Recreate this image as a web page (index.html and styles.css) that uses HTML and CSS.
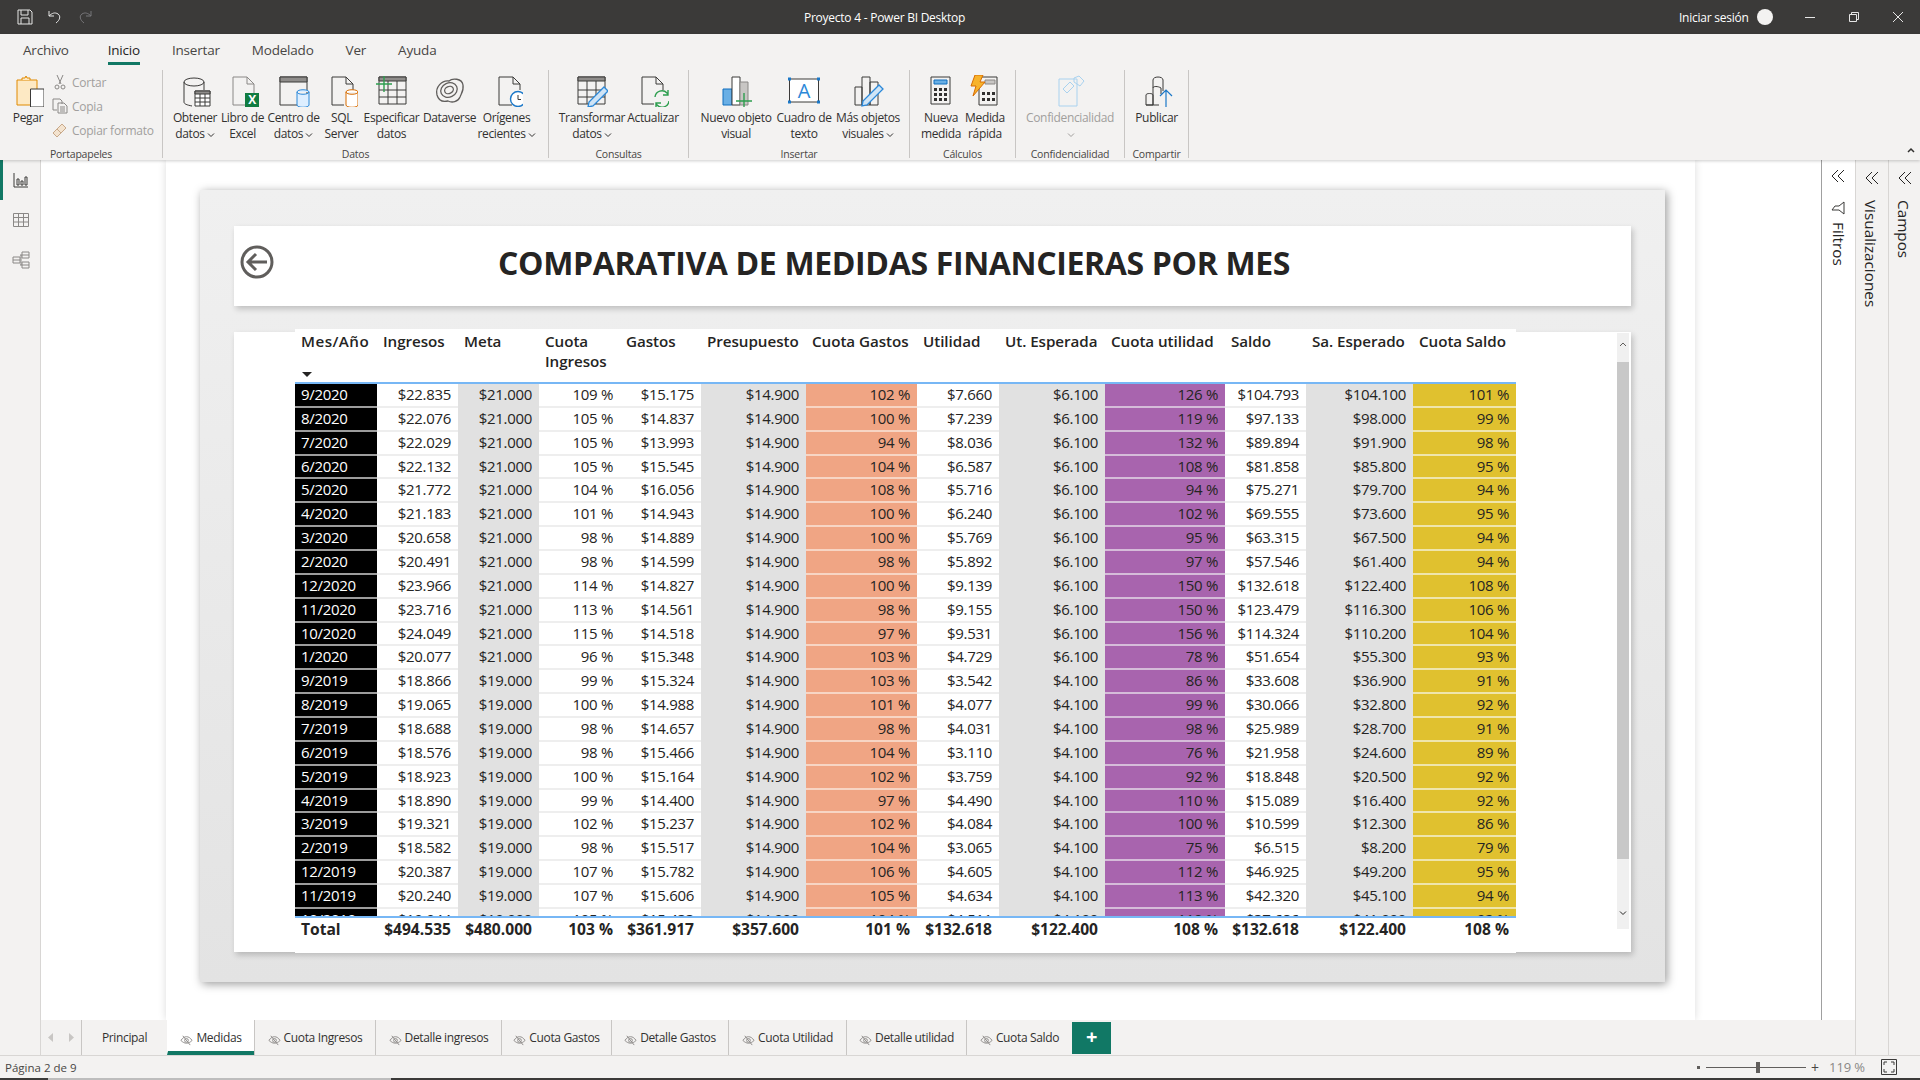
FILE: index.html
```html
<!DOCTYPE html>
<html lang="es">
<head>
  <meta charset="UTF-8" />
  <title>Proyecto 4 - Power BI Desktop</title>
  <link rel="stylesheet" href="styles.css">
</head>
<body>
  <svg class="defs" width="0" height="0">
    <symbol id="chev" viewBox="0 0 8 6"><path d="M1 1.5l3 3 3-3"/></symbol>
    <symbol id="dbl" viewBox="0 0 14 14"><path d="M7 1L1 7l6 6M13 1L7 7l6 6"/></symbol>
    <symbol id="hidden" viewBox="0 0 14 14"><path d="M1 8c2-3 4-4 6-4s4 1 6 4c-2 2-4 3-6 3S3 10 1 8zM3 3l8 10"/><circle cx="7" cy="8" r="2"/></symbol>
  </svg>

  <div class="titlebar">
    <div class="qat">
      <svg class="ico qat-save" width="16" height="16" viewBox="0 0 16 16"><path d="M1 1h12l2 2v12H1zM4 1v5h7V1M4 15v-6h8v6"/></svg>
      <svg class="ico qat-undo" width="16" height="16" viewBox="0 0 16 16"><path d="M2 2v5h5M2 7c3-3 6-4 9-2 3 2 2 6-2 9"/></svg>
      <svg class="ico qat-redo" width="16" height="16" viewBox="0 0 16 16"><path d="M14 2v5H9M14 7c-3-3-6-4-9-2-3 2-2 6 2 9"/></svg>
    </div>
    <div class="doc-title">Proyecto 4 - Power BI Desktop</div>
    <div class="signin">Iniciar sesión</div>
    <div class="avatar"></div>
    <div class="winbtn"><svg class="ico" width="12" height="12" viewBox="0 0 12 12"><path d="M1 6.5h10"/></svg></div>
    <div class="winbtn"><svg class="ico" width="12" height="12" viewBox="0 0 12 12"><path d="M1.5 3.5h7v7h-7zM3.5 3.5v-2h7v7h-2"/></svg></div>
    <div class="winbtn"><svg class="ico" width="12" height="12" viewBox="0 0 12 12"><path d="M1 1l10 10M11 1L1 11"/></svg></div>
  </div>

  <div class="ribbon">
    <div class="menu">
      <span class="menu-item first">Archivo</span>
      <span class="menu-item active">Inicio</span>
      <span class="menu-item">Insertar</span>
      <span class="menu-item">Modelado</span>
      <span class="menu-item">Ver</span>
      <span class="menu-item">Ayuda</span>
    </div>
    <div class="groups">
      <div class="group g-clip">
        <div class="btns">
          <div class="btn">
            <svg class="ico" width="32" height="32" viewBox="0 0 32 32"><path class="o" d="M5 5h20v25H5z"/><path class="o" d="M10 5V3h3l1-2 1 2h3v2"/><path class="w" d="M18.500 14H32v18H18.500z"/></svg>
            <span>Pegar</span>
          </div>
          <div class="clip-list">
            <div class="clip-item"><svg class="ico g" width="16" height="16" viewBox="0 0 16 16"><path d="M5 1l4 9M11 1L7 10"/><circle cx="5" cy="13" r="2"/><circle cx="11" cy="13" r="2"/></svg>Cortar</div>
            <div class="clip-item"><svg class="ico g" width="16" height="16" viewBox="0 0 16 16"><path d="M1 1h7l2 2v3M1 1v11h4M6 5h6l3 3v7H6zM8 9h5M8 11h5M8 13h5"/></svg>Copia</div>
            <div class="clip-item"><svg class="ico g" width="16" height="16" viewBox="0 0 16 16"><path class="dust" d="M10 2l4 4-5 5-4-4zM5 7L1 11l4 4 4-4"/></svg>Copiar formato</div>
          </div>
        </div>
        <div class="group-label">Portapapeles</div>
      </div>

      <div class="group g-datos">
        <div class="btns">
          <div class="btn">
            <svg class="ico" width="32" height="32" viewBox="0 0 32 32"><ellipse cx="15" cy="7" rx="10" ry="4"/><path d="M5 7v20c0 2 3 3 8 4M25 7v8"/><path class="w" d="M16 16h15v15H16z"/><path class="dk" d="M16 16h15v3H16z"/><path d="M21 19v12M26 19v12M16 23h15M16 27h15"/></svg>
            <span>Obtener<br>datos<svg class="chev"><use href="#chev"/></svg></span>
          </div>
          <div class="btn">
            <svg class="ico g" width="32" height="32" viewBox="0 0 32 32"><path d="M6 2h14l7 7v14M6 2v28h12M20 2v7h7"/><path class="xl" d="M18 18h14v14H18z"/><text class="xl-t" x="25" y="29">X</text></svg>
            <span>Libro de<br>Excel</span>
          </div>
          <div class="btn">
            <svg class="ico" width="32" height="32" viewBox="0 0 32 32"><path d="M2 2h27v28H2z"/><path class="dk" d="M2 2h27v5H2z"/><path class="cyl-b" d="M19 17c0-3 12-3 12 0v13c0 3-12 3-12 0zM19 17c0 3 12 3 12 0"/></svg>
            <span>Centro de<br>datos<svg class="chev"><use href="#chev"/></svg></span>
          </div>
          <div class="btn">
            <svg class="ico" width="32" height="32" viewBox="0 0 32 32"><path d="M6 2h14l7 7v7M6 2v28h12M20 2v7h7"/><path class="cyl-o" d="M20 17c0-3 12-3 12 0v13c0 3-12 3-12 0zM20 17c0 3 12 3 12 0"/></svg>
            <span>SQL<br>Server</span>
          </div>
          <div class="btn">
            <svg class="ico" width="32" height="32" viewBox="0 0 32 32"><path d="M3 2h27v27H3z"/><path class="dk" d="M3 2h27v4H3z"/><path d="M12 6v23M21 6v23M3 15h27M3 22h27"/><path class="gr" d="M8 1v16M0 9h16"/></svg>
            <span>Especificar<br>datos</span>
          </div>
          <div class="btn">
            <svg class="ico" width="32" height="32" viewBox="0 0 32 32"><path class="sw" d="M3 20C1 12 8 5 15 6c3-3 13-3 14 4 1 6-2 9-3 12-2 5-8 6-12 4-4 1-9 1-11-6z"/><ellipse class="sw" cx="15" cy="15" rx="8.5" ry="7" transform="rotate(-25 15 15)"/><ellipse class="sw" cx="15" cy="15" rx="4.5" ry="3.5" transform="rotate(-25 15 15)"/></svg>
            <span>Dataverse</span>
          </div>
          <div class="btn">
            <svg class="ico" width="32" height="32" viewBox="0 0 32 32"><path d="M8 2h14l7 7v6M8 2v28h13M22 2v7h7"/><circle class="clock" cx="27" cy="24" r="7.5"/><path d="M27 20v4.500h3"/></svg>
            <span>Orígenes<br>recientes<svg class="chev"><use href="#chev"/></svg></span>
          </div>
        </div>
        <div class="group-label">Datos</div>
      </div>

      <div class="group g-cons">
        <div class="btns">
          <div class="btn">
            <svg class="ico" width="32" height="32" viewBox="0 0 32 32"><path d="M2 2h27v27H2z"/><path class="dk" d="M2 2h27v4H2z"/><path d="M11 6v23M20 6v23M2 15h27M2 22h27"/><path class="pen" d="M28 12l4 4-15 15-5 1 1-5z"/></svg>
            <span>Transformar<br>datos<svg class="chev"><use href="#chev"/></svg></span>
          </div>
          <div class="btn">
            <svg class="ico" width="32" height="32" viewBox="0 0 32 32"><path d="M5 2h14l7 7v6M5 2v27h12M19 2v7h7"/><path class="ref" d="M18 22a7 7 0 0 1 12-4l1 2M32 26a7 7 0 0 1-12 4l-1-2M31 15v5h-5M19 33v-5h5"/></svg>
            <span>Actualizar</span>
          </div>
        </div>
        <div class="group-label">Consultas</div>
      </div>

      <div class="group g-ins">
        <div class="btns">
          <div class="btn">
            <svg class="ico" width="32" height="32" viewBox="0 0 32 32"><path class="bl" d="M3 14h9v16H3z"/><path class="w" d="M12 2h8v28h-8z"/><path class="gy" d="M20 7h8v23h-8z"/><path class="gr" d="M24 18v16M16 26h16"/></svg>
            <span>Nuevo objeto<br>visual</span>
          </div>
          <div class="btn">
            <svg class="ico" width="32" height="32" viewBox="0 0 32 32"><path class="w" d="M1.500 4h29v23h-29z"/><path class="hd" d="M0 2.500h3v3H0zM29 2.500h3v3h-3zM0 25.500h3v3H0zM29 25.500h3v3h-3z"/><text class="letter" x="16" y="23">A</text></svg>
            <span>Cuadro de<br>texto</span>
          </div>
          <div class="btn">
            <svg class="ico" width="32" height="32" viewBox="0 0 32 32"><path d="M3 12h7v18H3zM10 2h8v28h-8zM18 7h8v23h-8z"/><path class="pen" d="M27 10l4 4-16 16-5 1 1-5z"/></svg>
            <span>Más objetos<br>visuales<svg class="chev"><use href="#chev"/></svg></span>
          </div>
        </div>
        <div class="group-label">Insertar</div>
      </div>

      <div class="group g-calc">
        <div class="btns">
          <div class="btn">
            <svg class="ico" width="32" height="32" viewBox="0 0 32 32"><path d="M6 2h19v27H6z"/><path class="bl" d="M9 5h13v4H9z"/><path class="keys" d="M9 13h3v3H9zM14 13h3v3h-3zM19 13h3v3h-3zM9 18h3v3H9zM14 18h3v3h-3zM19 18h3v3h-3zM9 23h3v3H9zM14 23h3v3h-3zM19 23h3v3h-3z"/></svg>
            <span>Nueva<br>medida</span>
          </div>
          <div class="btn">
            <svg class="ico" width="32" height="32" viewBox="0 0 32 32"><path d="M10 2h18v28H10z"/><path class="gy" d="M16 5h10v4H16z"/><path class="keys" d="M13 17h3v3h-3zM18 17h3v3h-3zM23 17h3v3h-3zM13 23h3v3h-3zM18 23h3v3h-3zM23 23h3v3h-3z"/><path class="bolt" d="M6 0h8l-3 7h5L4 21l3-10H2z"/></svg>
            <span>Medida<br>rápida</span>
          </div>
        </div>
        <div class="group-label">Cálculos</div>
      </div>

      <div class="group g-conf">
        <div class="btns">
          <div class="btn off">
            <svg class="ico sens" width="32" height="32" viewBox="0 0 32 32"><path d="M5 4h18v27H5zM9 14l7-7 4 4-7 7zM20 3l5-2 5 5-4 5-6-4z"/></svg>
            <span>Confidencialidad<br><svg class="chev"><use href="#chev"/></svg></span>
          </div>
        </div>
        <div class="group-label">Confidencialidad</div>
      </div>

      <div class="group g-comp">
        <div class="btns">
          <div class="btn">
            <svg class="ico" width="32" height="32" viewBox="0 0 32 32"><path d="M5 30V20c0-2 7-2 7 0v10zM12 30V13c0-2 5-2 8 0v6M12 13V5c0-4 10-4 10 0v11M5 30h13"/><path class="up" d="M25 32V15M19 21l6-6 6 6"/></svg>
            <span>Publicar</span>
          </div>
        </div>
        <div class="group-label">Compartir</div>
      </div>

      <svg class="chev collapse"><path d="M1 5l3-3 3 3"/></svg>
    </div>
  </div>

  <div class="main">
    <div class="rail">
      <div class="rail-btn current"><svg class="ico" width="16" height="16" viewBox="0 0 16 16"><path d="M1 1v14h14M4 7h2v6H4zM8 9h2v4H8zM12 5h2v8h-2z"/></svg></div>
      <div class="rail-btn"><svg class="ico g" width="16" height="16" viewBox="0 0 16 16"><path d="M.5 1.500h15v13H.5zM.5 5.500h15M.5 10h15M5.500 1.500v13M10.500 1.500v13"/></svg></div>
      <div class="rail-btn"><svg class="ico g" width="18" height="18" viewBox="0 0 18 18"><path d="M1 6h7v6H1zM10 1h7v6h-7zM10 11h7v6h-7zM8 4h2M8 14h2M9 4v10M1 9h7M10 4h7M10 14h7"/></svg></div>
    </div>

    <div class="workspace">
      <div class="canvas-row">
        <div class="canvas">
          <div class="report-page">
            <div class="header-card">
              <svg class="back" width="34" height="34" viewBox="0 0 34 34"><circle cx="17" cy="17" r="15"/><path d="M27 17H9M16 9l-8 8 8 8"/></svg>
              <h1>COMPARATIVA DE MEDIDAS FINANCIERAS POR MES</h1>
            </div>

            <div class="visual">
              <div class="matrix">
                <div class="row head">
                  <span>Mes/Año<i class="sort"></i></span><span>Ingresos</span><span>Meta</span><span>Cuota Ingresos</span><span>Gastos</span><span>Presupuesto</span><span>Cuota Gastos</span><span>Utilidad</span><span>Ut. Esperada</span><span>Cuota utilidad</span><span>Saldo</span><span>Sa. Esperado</span><span>Cuota Saldo</span>
                </div>
                <div class="rows">
                  <div class="row"><span>9/2020</span><span>$22.835</span><span>$21.000</span><span>109 %</span><span>$15.175</span><span>$14.900</span><span>102 %</span><span>$7.660</span><span>$6.100</span><span>126 %</span><span>$104.793</span><span>$104.100</span><span>101 %</span></div>
                  <div class="row"><span>8/2020</span><span>$22.076</span><span>$21.000</span><span>105 %</span><span>$14.837</span><span>$14.900</span><span>100 %</span><span>$7.239</span><span>$6.100</span><span>119 %</span><span>$97.133</span><span>$98.000</span><span>99 %</span></div>
                  <div class="row"><span>7/2020</span><span>$22.029</span><span>$21.000</span><span>105 %</span><span>$13.993</span><span>$14.900</span><span>94 %</span><span>$8.036</span><span>$6.100</span><span>132 %</span><span>$89.894</span><span>$91.900</span><span>98 %</span></div>
                  <div class="row"><span>6/2020</span><span>$22.132</span><span>$21.000</span><span>105 %</span><span>$15.545</span><span>$14.900</span><span>104 %</span><span>$6.587</span><span>$6.100</span><span>108 %</span><span>$81.858</span><span>$85.800</span><span>95 %</span></div>
                  <div class="row"><span>5/2020</span><span>$21.772</span><span>$21.000</span><span>104 %</span><span>$16.056</span><span>$14.900</span><span>108 %</span><span>$5.716</span><span>$6.100</span><span>94 %</span><span>$75.271</span><span>$79.700</span><span>94 %</span></div>
                  <div class="row"><span>4/2020</span><span>$21.183</span><span>$21.000</span><span>101 %</span><span>$14.943</span><span>$14.900</span><span>100 %</span><span>$6.240</span><span>$6.100</span><span>102 %</span><span>$69.555</span><span>$73.600</span><span>95 %</span></div>
                  <div class="row"><span>3/2020</span><span>$20.658</span><span>$21.000</span><span>98 %</span><span>$14.889</span><span>$14.900</span><span>100 %</span><span>$5.769</span><span>$6.100</span><span>95 %</span><span>$63.315</span><span>$67.500</span><span>94 %</span></div>
                  <div class="row"><span>2/2020</span><span>$20.491</span><span>$21.000</span><span>98 %</span><span>$14.599</span><span>$14.900</span><span>98 %</span><span>$5.892</span><span>$6.100</span><span>97 %</span><span>$57.546</span><span>$61.400</span><span>94 %</span></div>
                  <div class="row"><span>12/2020</span><span>$23.966</span><span>$21.000</span><span>114 %</span><span>$14.827</span><span>$14.900</span><span>100 %</span><span>$9.139</span><span>$6.100</span><span>150 %</span><span>$132.618</span><span>$122.400</span><span>108 %</span></div>
                  <div class="row"><span>11/2020</span><span>$23.716</span><span>$21.000</span><span>113 %</span><span>$14.561</span><span>$14.900</span><span>98 %</span><span>$9.155</span><span>$6.100</span><span>150 %</span><span>$123.479</span><span>$116.300</span><span>106 %</span></div>
                  <div class="row"><span>10/2020</span><span>$24.049</span><span>$21.000</span><span>115 %</span><span>$14.518</span><span>$14.900</span><span>97 %</span><span>$9.531</span><span>$6.100</span><span>156 %</span><span>$114.324</span><span>$110.200</span><span>104 %</span></div>
                  <div class="row"><span>1/2020</span><span>$20.077</span><span>$21.000</span><span>96 %</span><span>$15.348</span><span>$14.900</span><span>103 %</span><span>$4.729</span><span>$6.100</span><span>78 %</span><span>$51.654</span><span>$55.300</span><span>93 %</span></div>
                  <div class="row"><span>9/2019</span><span>$18.866</span><span>$19.000</span><span>99 %</span><span>$15.324</span><span>$14.900</span><span>103 %</span><span>$3.542</span><span>$4.100</span><span>86 %</span><span>$33.608</span><span>$36.900</span><span>91 %</span></div>
                  <div class="row"><span>8/2019</span><span>$19.065</span><span>$19.000</span><span>100 %</span><span>$14.988</span><span>$14.900</span><span>101 %</span><span>$4.077</span><span>$4.100</span><span>99 %</span><span>$30.066</span><span>$32.800</span><span>92 %</span></div>
                  <div class="row"><span>7/2019</span><span>$18.688</span><span>$19.000</span><span>98 %</span><span>$14.657</span><span>$14.900</span><span>98 %</span><span>$4.031</span><span>$4.100</span><span>98 %</span><span>$25.989</span><span>$28.700</span><span>91 %</span></div>
                  <div class="row"><span>6/2019</span><span>$18.576</span><span>$19.000</span><span>98 %</span><span>$15.466</span><span>$14.900</span><span>104 %</span><span>$3.110</span><span>$4.100</span><span>76 %</span><span>$21.958</span><span>$24.600</span><span>89 %</span></div>
                  <div class="row"><span>5/2019</span><span>$18.923</span><span>$19.000</span><span>100 %</span><span>$15.164</span><span>$14.900</span><span>102 %</span><span>$3.759</span><span>$4.100</span><span>92 %</span><span>$18.848</span><span>$20.500</span><span>92 %</span></div>
                  <div class="row"><span>4/2019</span><span>$18.890</span><span>$19.000</span><span>99 %</span><span>$14.400</span><span>$14.900</span><span>97 %</span><span>$4.490</span><span>$4.100</span><span>110 %</span><span>$15.089</span><span>$16.400</span><span>92 %</span></div>
                  <div class="row"><span>3/2019</span><span>$19.321</span><span>$19.000</span><span>102 %</span><span>$15.237</span><span>$14.900</span><span>102 %</span><span>$4.084</span><span>$4.100</span><span>100 %</span><span>$10.599</span><span>$12.300</span><span>86 %</span></div>
                  <div class="row"><span>2/2019</span><span>$18.582</span><span>$19.000</span><span>98 %</span><span>$15.517</span><span>$14.900</span><span>104 %</span><span>$3.065</span><span>$4.100</span><span>75 %</span><span>$6.515</span><span>$8.200</span><span>79 %</span></div>
                  <div class="row"><span>12/2019</span><span>$20.387</span><span>$19.000</span><span>107 %</span><span>$15.782</span><span>$14.900</span><span>106 %</span><span>$4.605</span><span>$4.100</span><span>112 %</span><span>$46.925</span><span>$49.200</span><span>95 %</span></div>
                  <div class="row"><span>11/2019</span><span>$20.240</span><span>$19.000</span><span>107 %</span><span>$15.606</span><span>$14.900</span><span>105 %</span><span>$4.634</span><span>$4.100</span><span>113 %</span><span>$42.320</span><span>$45.100</span><span>94 %</span></div>
                  <div class="row"><span>10/2019</span><span>$19.944</span><span>$19.000</span><span>105 %</span><span>$15.433</span><span>$14.900</span><span>104 %</span><span>$4.511</span><span>$4.100</span><span>110 %</span><span>$37.686</span><span>$41.000</span><span>92 %</span></div>
                </div>
                <div class="row total">
                  <span>Total</span><span>$494.535</span><span>$480.000</span><span>103 %</span><span>$361.917</span><span>$357.600</span><span>101 %</span><span>$132.618</span><span>$122.400</span><span>108 %</span><span>$132.618</span><span>$122.400</span><span>108 %</span>
                </div>
              </div>
              <div class="scrollbar">
                <svg class="chev sb-arrow"><path d="M1 5l3-3 3 3"/></svg>
                <div class="sb-thumb"></div>
                <svg class="chev sb-arrow"><use href="#chev"/></svg>
              </div>
            </div>
          </div>
        </div>
        <div class="canvas-side"></div>
        <div class="pane pane-filters">
          <svg class="ico dbl"><use href="#dbl"/></svg>
          <svg class="ico funnel" width="14" height="14" viewBox="0 0 14 14"><path d="M1 1h12L9 6v7L5 10V6z"/></svg>
          <span class="pane-name">Filtros</span>
        </div>
      </div>

      <div class="tabs">
        <div class="tab-nav">
          <svg width="6" height="9" viewBox="0 0 6 9"><path d="M5 0v9L0 4.500z"/></svg>
          <svg width="6" height="9" viewBox="0 0 6 9"><path d="M1 0v9l5-4.500z"/></svg>
        </div>
        <div class="tab">Principal</div>
        <div class="tab selected"><svg class="eye"><use href="#hidden"/></svg>Medidas</div>
        <div class="tab"><svg class="eye"><use href="#hidden"/></svg>Cuota Ingresos</div>
        <div class="tab"><svg class="eye"><use href="#hidden"/></svg>Detalle ingresos</div>
        <div class="tab"><svg class="eye"><use href="#hidden"/></svg>Cuota Gastos</div>
        <div class="tab"><svg class="eye"><use href="#hidden"/></svg>Detalle Gastos</div>
        <div class="tab"><svg class="eye"><use href="#hidden"/></svg>Cuota Utilidad</div>
        <div class="tab"><svg class="eye"><use href="#hidden"/></svg>Detalle utilidad</div>
        <div class="tab"><svg class="eye"><use href="#hidden"/></svg>Cuota Saldo</div>
        <div class="tab-add">+</div>
      </div>
    </div>

    <div class="pane">
      <svg class="ico dbl"><use href="#dbl"/></svg>
      <span class="pane-name name-top">Visualizaciones</span>
    </div>
    <div class="pane">
      <svg class="ico dbl"><use href="#dbl"/></svg>
      <span class="pane-name name-top">Campos</span>
    </div>
  </div>

  <div class="statusbar">
    <span>Página 2 de 9</span>
    <div class="zoom">
      <i class="zoom-dot"></i>
      <div class="zoom-slider"><i class="zoom-thumb"></i></div>
      <span class="zoom-plus">+</span>
      <span class="zoom-value">119 %</span>
      <svg class="ico fit" width="16" height="16" viewBox="0 0 16 16"><path d="M.5.5h15v15H.5zM3 6V3h3M10 3h3v3M13 10v3h-3M6 13H3v-3"/></svg>
    </div>
  </div>
  <div class="taskbar-edge"></div>
</body>
</html>
```

FILE: styles.css
```css
* {
  box-sizing: border-box;
}

html, body {
  margin: 0;
  height: 1080px;
  overflow: hidden;
}

body {
  display: flex;
  flex-direction: column;
  font-family: "Open Sans", "Noto Sans", sans-serif;
  color: #252423;
  background: #fff;
}

.defs {
  position: absolute;
}

symbol path, symbol circle {
  fill: none;
  stroke: currentColor;
}

/* title bar */
.titlebar {
  display: flex;
  align-items: center;
  height: 34px;
  flex: none;
  background: #3b3a39;
  color: #fff;
  font-size: 12px;
  letter-spacing: -0.25px;
}

.qat {
  display: flex;
  align-items: center;
  width: 804px;
  padding-left: 17px;
  gap: 14px;
}

.titlebar .ico path {
  stroke: #e6e6e6;
}

.titlebar .qat-redo path {
  stroke: #77767a;
}

.doc-title {
  width: 875px;
}

.signin {
  width: 78px;
}

.avatar {
  width: 16px;
  height: 16px;
  margin-right: 15px;
  border-radius: 50%;
  background: #f3f2f1;
}

.winbtn {
  display: flex;
  align-items: center;
  justify-content: center;
  width: 44px;
}

/* generic icon strokes */
.ico {
  flex: none;
  fill: none;
  stroke: #3b3a39;
  stroke-width: 1;
}

.ico.g { stroke: #8a8886; }
.ico .w { fill: #fff; }
.ico .o { stroke: #e08a00; fill: #fde9c4; }
.ico .dk { fill: #8f8d8b; stroke: #3b3a39; }
.ico .gy { fill: #c8c6c4; stroke: #8a8886; }
.ico .bl { fill: #69afe5; stroke: #106ebe; }
.ico .gr { stroke: #2e9e4f; stroke-width: 1.4; }
.ico .xl { fill: #107c41; stroke: none; }
.ico .xl-t { fill: #fff; stroke: none; font-size: 12px; font-weight: 700; text-anchor: middle; }
.ico .cyl-b { fill: #def; stroke: #2b88d8; }
.ico .cyl-o { fill: #fff; stroke: #d86c00; }
.ico .sw { stroke: #605e5c; stroke-width: 1.3; }
.ico .clock { fill: #fff; stroke: #1b78c8; stroke-width: 1.4; }
.ico .pen { fill: #cfe4f6; stroke: #2b88d8; stroke-width: 1.3; }
.ico .ref { stroke: #2e9e4f; stroke-width: 1.4; }
.ico .hd { fill: #1b78c8; stroke: none; }
.ico .letter { fill: #2b88d8; stroke: none; font-size: 20px; text-anchor: middle; }
.ico .keys { fill: #323130; stroke: none; }
.ico .bolt { fill: #f7b32b; stroke: #d86c00; }
.ico .up { stroke: #1b78c8; stroke-width: 1.2; }
.ico .dust { stroke: #c8a98a; fill: #f3e3cf; }
.ico.sens { stroke: #a9d2ef; }

/* ribbon */
.ribbon {
  position: relative;
  z-index: 3;
  flex: none;
  height: 126px;
  background: #f3f2f1;
  box-shadow: 0 1px 3px rgba(0, 0, 0, 0.2);
}

.menu {
  display: flex;
  gap: 32px;
  height: 36px;
  padding-left: 23px;
  font-size: 13.5px;
  letter-spacing: -0.2px;
}

.menu-item {
  height: 31px;
  padding-top: 6px;
  line-height: 20px;
  color: #484644;
}

.menu-item.first {
  margin-right: 7px;
}

.menu-item.active {
  border-bottom: 3px solid #117865;
  color: #252423;
}

.groups {
  display: flex;
  height: 88px;
}

.group {
  display: flex;
  flex-direction: column;
  height: 88px;
  border-right: 1px solid #c8c6c4;
}

.btns {
  display: grid;
  height: 77px;
}

.group-label {
  height: 11px;
  font-size: 10.5px;
  line-height: 14px;
  letter-spacing: -0.2px;
  text-align: center;
  color: #484644;
  white-space: nowrap;
}

.btn {
  display: flex;
  flex-direction: column;
  align-items: center;
  padding-top: 5px;
  font-size: 12px;
  letter-spacing: -0.35px;
  white-space: nowrap;
  text-align: center;
  color: #323130;
}

.btn span {
  margin-top: 3px;
  line-height: 16px;
}

.btn.off {
  color: #a19f9d;
}

.chev {
  width: 8px;
  height: 6px;
  margin-left: 2px;
  fill: none;
  stroke: #323130;
}

.off .chev {
  stroke: #a19f9d;
}

.g-clip { width: 163px; }
.g-clip .btns { grid-template-columns: 46px 1fr; padding-left: 5px; }
.g-datos { width: 386px; }
.g-datos .btns { grid-template-columns: 54px 41px 61px 35px 65px 51px 63px; padding-left: 5px; }
.g-cons { width: 140px; }
.g-cons .btns { grid-template-columns: 70px 52px; padding-left: 8px; }
.g-ins { width: 221px; }
.g-ins .btns { grid-template-columns: 78px 58px 70px; padding-left: 8px; }
.g-calc { width: 106px; }
.g-calc .btns { grid-template-columns: 50px 38px; padding-left: 6px; }
.g-conf { width: 109px; }
.g-conf .btns { grid-template-columns: 1fr; }
.g-comp { width: 64px; }
.g-comp .btns { grid-template-columns: 1fr; }

.clip-list {
  display: flex;
  flex-direction: column;
  font-size: 12px;
  letter-spacing: -0.25px;
  color: #a19f9d;
}

.clip-item {
  display: flex;
  align-items: center;
  gap: 4px;
  height: 24px;
  padding-left: 1px;
  white-space: nowrap;
}

.collapse {
  align-self: flex-end;
  margin: 0 5px 5px auto;
  stroke-width: 1.5;
}

/* main area */
.main {
  display: flex;
  flex: none;
  height: 895px;
}

.rail {
  flex: none;
  width: 41px;
  background: #f3f2f1;
  border-right: 1px solid #d8d6d4;
}

.rail-btn {
  display: flex;
  align-items: center;
  justify-content: center;
  height: 40px;
  padding-left: 2px;
}

.rail-btn.current {
  border-left: 3px solid #117865;
  padding: 0 1px 0 0;
}

.workspace {
  display: flex;
  flex-direction: column;
  flex: none;
  width: 1814px;
}

.canvas-row {
  display: flex;
  flex: none;
  height: 860px;
  padding-left: 125px;
  overflow: hidden;
}

.canvas {
  position: relative;
  flex: none;
  width: 1529px;
  padding: 30px 30px 0 34px;
  background: #fff;
  box-shadow: 0 0 8px rgba(0, 0, 0, 0.14);
}

.canvas-side {
  flex: none;
  width: 126px;
}

.report-page {
  height: 792px;
  padding: 36px 34px 0 34px;
  background: linear-gradient(#f0f0f0, #e3e3e3);
  box-shadow: 2px 2px 9px rgba(0, 0, 0, 0.4);
}

.header-card {
  display: flex;
  align-items: center;
  height: 80px;
  padding: 0 0 8px 6px;
  background: #fff;
  box-shadow: 2px 3px 6px rgba(0, 0, 0, 0.2);
}

.back {
  flex: none;
  fill: none;
  stroke: #605e5c;
  stroke-width: 3;
}

.header-card h1 {
  margin: 0 0 0 224px;
  font-size: 32px;
  font-weight: 700;
  letter-spacing: -0.35px;
  white-space: nowrap;
  color: #252423;
}

/* matrix visual */
.visual {
  display: flex;
  height: 620px;
  margin-top: 26px;
  padding-left: 61px;
  background: #fff;
  box-shadow: 2px 3px 6px rgba(0, 0, 0, 0.2);
}

.matrix {
  width: 1221px;
  margin-top: -3px;
  font-size: 15px;
  letter-spacing: -0.3px;
}

.row {
  display: grid;
  grid-template-columns: 82px 81px 81px 81px 81px 105px 111px 82px 106px 120px 81px 107px 103px;
}

.row span {
  height: 23.86px;
  padding: 0 7px 0 0;
  line-height: 21px;
  text-align: right;
  white-space: nowrap;
  border-bottom: 2px solid #eee;
  background: #fff;
}

.row span:nth-child(1) {
  padding-left: 6px;
  text-align: left;
  background: #000;
  color: #fff;
  border-color: #9c9c9c;
}

.row span:nth-child(3),
.row span:nth-child(6),
.row span:nth-child(9),
.row span:nth-child(12) {
  background: #e1e1e1;
  border-color: #e1e1e1;
}

.row span:nth-child(7) {
  background: #f0a584;
  border-color: #f7d5c4;
}

.row span:nth-child(10) {
  background: #a864ae;
  border-color: #d5bcd9;
}

.row span:nth-child(13) {
  background: #e0c12f;
  border-color: #efe5ac;
}

.row.head {
  height: 53px;
  font-size: 15.2px;
  font-weight: 600;
  letter-spacing: -0.05px;
}

.row.head span,
.row.total span {
  background: #fff;
  border: 0;
  color: #252423;
}

.row.head span {
  position: relative;
  height: 53px;
  padding: 2px 4px 0 6px;
  line-height: 20px;
  text-align: left;
  white-space: normal;
}

.row.head span:nth-child(n+5),
.row.head span:nth-child(2),
.row.head span:nth-child(1) {
  white-space: nowrap;
}

.row.head span:nth-child(1) {
  letter-spacing: 0.45px;
}

.sort {
  position: absolute;
  left: 7px;
  top: 43px;
  border: 5px solid transparent;
  border-top: 5px solid #252423;
  border-bottom: 0;
}

.rows {
  height: 536px;
  padding-bottom: 2px;
  overflow: hidden;
  border-top: 2px solid #77b7f5;
  border-bottom: 2px solid #77b7f5;
}

.row.total {
  font-size: 15.6px;
  font-weight: 700;
  letter-spacing: 0;
}

.row.total span {
  height: 35px;
  line-height: 22px;
}

.scrollbar {
  display: flex;
  flex-direction: column;
  align-items: center;
  width: 12px;
  height: 596px;
  margin: 1px 2px 0 auto;
  background: #f0f0f0;
}

.sb-arrow {
  flex: none;
  margin: 8px 0 15px;
  stroke: #605e5c;
}

.sb-thumb {
  flex: none;
  width: 100%;
  height: 497px;
  background: #c8c8c8;
}

.scrollbar .sb-arrow:last-child {
  margin: 51px 0 0;
}

/* side panes */
.pane {
  display: flex;
  flex-direction: column;
  align-items: center;
  flex: none;
  width: 33px;
  padding-top: 11px;
  background: #f3f2f1;
  border-left: 1px solid #d8d6d4;
  color: #252423;
}

.pane-filters {
  height: 860px;
  padding-top: 9px;
  background: #fff;
  border-left: 1px solid #a0a0a0;
}

.dbl {
  width: 14px;
  height: 14px;
  stroke: #3b3a39;
}

.funnel {
  margin-top: 18px;
  transform: rotate(90deg);
}

.pane-name {
  margin-top: 7px;
  margin-left: 2px;
  writing-mode: vertical-rl;
  font-size: 15.3px;
  line-height: 16px;
}

.pane .name-top {
  margin: 15px 3px 0 0;
}

/* page tabs */
.tabs {
  display: grid;
  grid-template-columns: 40px 86px 87px 121px 126px 110px 117px 118px 120px 106px 39px;
  flex: none;
  height: 35px;
  background: #f3f2f1;
  font-size: 12px;
  letter-spacing: -0.35px;
  color: #323130;
}

.tab-nav {
  display: flex;
  align-items: center;
  justify-content: center;
  gap: 14px;
  fill: #c8c6c4;
}

.tab {
  display: flex;
  align-items: center;
  justify-content: center;
  gap: 3px;
  border-left: 1px solid #c8c6c4;
}

.tab.selected {
  background: #fff;
  border-bottom: 4px solid #117865;
  border-left-color: #fff;
  padding-top: 4px;
}

.eye {
  width: 13px;
  height: 13px;
  margin-top: 3px;
  color: #8a8886;
}

.tab-add {
  height: 32px;
  margin-top: 2px;
  background: #117865;
  color: #fff;
  font-size: 20px;
  font-weight: 700;
  line-height: 30px;
  text-align: center;
}

/* status bar */
.statusbar {
  display: flex;
  align-items: center;
  justify-content: space-between;
  flex: none;
  height: 23px;
  padding-left: 5px;
  background: #f3f2f1;
  border-top: 1px solid #d8d6d4;
  font-size: 11.5px;
  color: #484644;
}

.zoom {
  display: flex;
  align-items: center;
}

.zoom-dot {
  width: 3px;
  height: 3px;
  margin-right: 6px;
  background: #605e5c;
}

.zoom-slider {
  position: relative;
  width: 100px;
  height: 1px;
  background: #605e5c;
}

.zoom-thumb {
  position: absolute;
  left: 50px;
  top: -5px;
  width: 4px;
  height: 11px;
  background: #605e5c;
}

.zoom-plus {
  margin: 0 10px 0 5px;
  font-size: 14px;
}

.zoom-value {
  margin-right: 16px;
  font-size: 13px;
  letter-spacing: -0.1px;
  color: #8a8886;
}

.fit {
  margin-right: 23px;
}

.taskbar-edge {
  flex: none;
  height: 2px;
  background: linear-gradient(to right, #3b3a39 48px, #bdbdbd 48px, #bdbdbd 391px, #3b3a39 391px);
}
```
